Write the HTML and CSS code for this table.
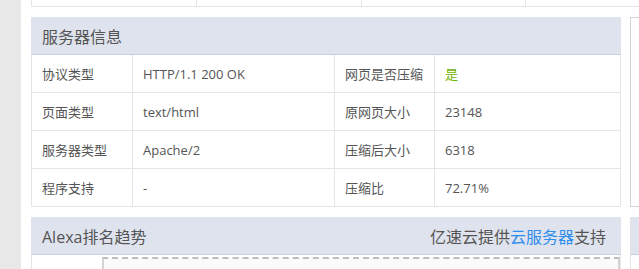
FILE: index.html
```
<!DOCTYPE html>
<html>

<head>
    <meta name="viewport" content="width=device-width, initial-scale=1.0">
    <meta charset="UTF-8">
    <title>网站信息查询</title>
    <link rel="stylesheet" href="styles.css">
</head>

<body>
    <div id="sidebar"></div>
    <div id="main">
        <table class="grid top-row">
            <tr>
                <td></td>
                <td></td>
                <td></td>
                <td></td>
            </tr>
        </table>
        <div class="columns">
            <div class="left">
                <div class="panel">
                    <div class="panel-head">服务器信息</div>
                    <table class="grid info">
                        <tr>
                            <td class="c1">协议类型</td>
                            <td class="c2">HTTP/1.1 200 OK</td>
                            <td class="c3">网页是否压缩</td>
                            <td class="c4"><span class="yes">是</span></td>
                        </tr>
                        <tr>
                            <td>页面类型</td>
                            <td>text/html</td>
                            <td>原网页大小</td>
                            <td>23148</td>
                        </tr>
                        <tr>
                            <td>服务器类型</td>
                            <td>Apache/2</td>
                            <td>压缩后大小</td>
                            <td>6318</td>
                        </tr>
                        <tr>
                            <td>程序支持</td>
                            <td>-</td>
                            <td>压缩比</td>
                            <td>72.71%</td>
                        </tr>
                    </table>
                </div>
                <div class="panel">
                    <div class="panel-head">
                        <span>Alexa排名趋势</span>
                        <span class="sponsor">亿速云提供<a href="#">云服务器</a>支持</span>
                    </div>
                    <div class="panel-body">
                        <div class="chart"></div>
                    </div>
                </div>
            </div>
            <div class="right">
                <div class="side-box"></div>
                <div class="side-panel">
                    <div class="panel-head"></div>
                    <div class="side-body"></div>
                </div>
            </div>
        </div>
    </div>
</body>

</html>
```

FILE: styles.css
```
body {
    margin: 0;
    display: flex;
    height: 269px;
    overflow: hidden;
    font-family: "Microsoft YaHei", "Open Sans", "Noto Sans CJK SC", sans-serif;
    font-size: 13px;
    color: #555;
    background: #fff;
}

#sidebar {
    width: 21px;
    flex-shrink: 0;
    background: #e8e8e8;
}

#main {
    flex: 1;
    padding-left: 10px;
    overflow: hidden;
}

.grid {
    border-collapse: collapse;
    font-size: inherit;
}

.grid td {
    border: 1px solid #e5e5e5;
    padding: 0 0 0 10px;
    white-space: nowrap;
}

.top-row {
    width: 660px;
    table-layout: fixed;
    margin-top: -1px;
}

.top-row td {
    height: 7px;
    border-top: none;
    padding: 0;
}

.columns {
    display: flex;
    gap: 9px;
    margin-top: 10px;
}

.left {
    width: 590px;
    flex-shrink: 0;
}

.panel {
    margin-bottom: 10px;
}

.panel-head {
    height: 37px;
    background: #dfe3ed;
    border-bottom: 1px solid #c8cedb;
    display: flex;
    align-items: center;
    justify-content: space-between;
    padding: 0 15px 0 11px;
    font-size: 16px;
    color: #555;
}

.sponsor a {
    color: #2e8ded;
    text-decoration: none;
}

.info {
    width: 590px;
    table-layout: fixed;
}

.info td {
    height: 37px;
    border-top: none;
}

.c1 {
    width: 90px;
}

.c2 {
    width: 191px;
}

.c3 {
    width: 89px;
}

.yes {
    color: #72b300;
}

.panel-body {
    border-left: 1px solid #e5e5e5;
    border-right: 1px solid #e5e5e5;
    padding: 2px 0 0 70px;
    height: 60px;
}

.chart {
    width: 514px;
    height: 60px;
    border: 2px solid #d3d3d3;
    border-top: 2px dashed #bdbdbd;
    background: #fafafa;
}

.right {
    flex: 1;
}

.side-box {
    height: 188px;
    border: 1px solid #d4d4d4;
    border-right: none;
}

.side-panel {
    margin-top: 10px;
    border-left: 1px solid #e5e5e5;
}

.side-panel .panel-head {
    padding: 0;
}

.side-body {
    height: 60px;
}
```
